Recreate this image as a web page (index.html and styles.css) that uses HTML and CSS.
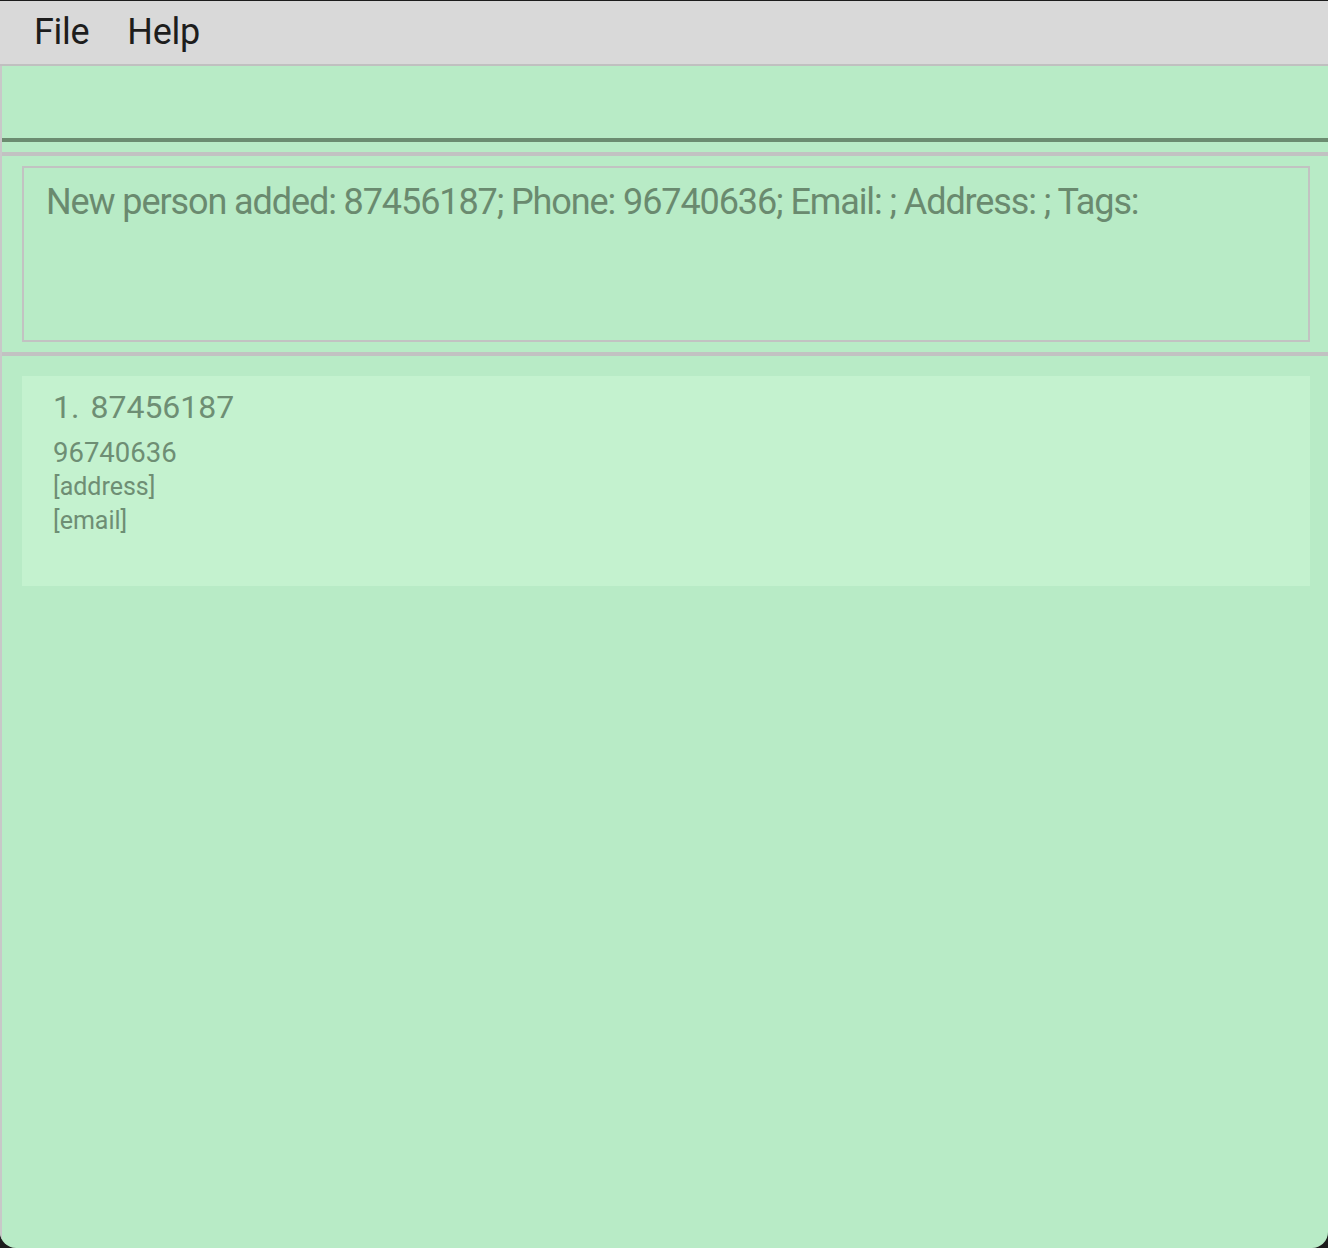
FILE: index.html
```html
<!DOCTYPE html>
<html lang="en">
<head>
<meta charset="utf-8">
<title>Address App</title>
<link rel="stylesheet" href="styles.css">
</head>
<body>
<div class="window">
  <div class="menubar">
    <span class="menu-item">File</span>
    <span class="menu-item">Help</span>
  </div>
  <div class="main">
    <div class="command-pane"></div>
    <div class="result-pane">
      <div class="result-box">New person added: 87456187; Phone: 96740636; Email: ; Address: ; Tags:</div>
    </div>
    <div class="list-pane">
      <div class="card">
        <div class="card-name"><span class="card-id">1.</span><span>87456187</span></div>
        <div class="card-phone">96740636</div>
        <div class="card-detail">[address]</div>
        <div class="card-detail">[email]</div>
      </div>
    </div>
  </div>
</div>
</body>
</html>
```

FILE: styles.css
```css
html, body {
  margin: 0;
  padding: 0;
}
body {
  background: #1c1c1c;
  font-family: Roboto, "Liberation Sans", sans-serif;
}
.window {
  margin-top: 1px;
  height: 1247px;
  display: flex;
  flex-direction: column;
  background: #b8ebc6;
  border-radius: 0 0 16px 16px;
  overflow: hidden;
}
.menubar {
  height: 63px;
  flex: none;
  display: flex;
  align-items: center;
  padding-left: 34px;
  gap: 38px;
  background: #d9d9d9;
  border-bottom: 2px solid #c0c0c0;
}
.menu-item {
  font-size: 36px;
  line-height: 63px;
  letter-spacing: -0.3px;
  color: #1d1d1d;
}
.main {
  flex: 1;
  border-left: 2px solid #c8c8c8;
  display: flex;
  flex-direction: column;
}
.command-pane {
  height: 72px;
  flex: none;
  border-bottom: 4px solid #6b8c70;
}
.result-pane {
  margin-top: 10px;
  padding: 10px 18px 10px 20px;
  border-top: 4px solid #c2c2c2;
  border-bottom: 4px solid #c2c2c2;
}
.result-box {
  box-sizing: content-box;
  border: 2px solid #c2c2c2;
  padding: 12px 0 0 22px;
  height: 160px;
  font-size: 36px;
  line-height: 44px;
  letter-spacing: -1.1px;
  color: #6a8a6f;
  white-space: nowrap;
}
.list-pane {
  padding: 20px 18px 0 20px;
}
.card {
  height: 210px;
  box-sizing: border-box;
  background: #c4f2cf;
  padding: 11px 0 0 31px;
  color: #6e8e74;
}
.card-name {
  font-size: 32px;
  line-height: 40px;
  margin-bottom: 9px;
  display: flex;
  gap: 11px;
}
.card-phone {
  font-size: 27.5px;
  line-height: 34px;
}
.card-detail {
  font-size: 25px;
  line-height: 34px;
}
```
